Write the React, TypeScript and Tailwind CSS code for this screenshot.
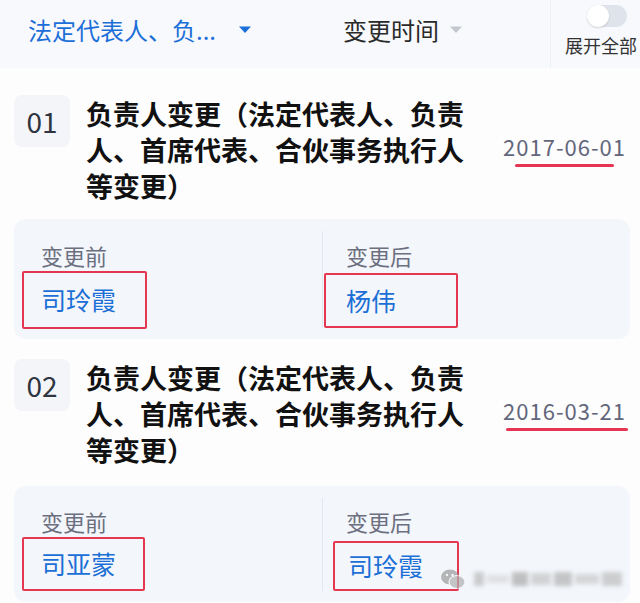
import React from "react";

const font = "font-['Noto_Sans_CJK_SC','Noto_Sans',sans-serif]";

type Change = {
  no: string;
  date: string;
  before: string;
  after: string;
};

const changes: Change[] = [
  { no: "01", date: "2017-06-01", before: "司玲霞", after: "杨伟" },
  { no: "02", date: "2016-03-21", before: "司亚蒙", after: "司玲霞" },
];

function Caret({ className }: { className: string }) {
  return (
    <svg width="14" height="9" viewBox="0 0 14 9" className={className}>
      <path d="M1 1.5h12L7 8z" fill="currentColor" strokeLinejoin="round" />
    </svg>
  );
}

function Watermark() {
  return (
    <div className="absolute right-[8px] bottom-[12px] flex items-center gap-2 opacity-70">
      <svg width="26" height="22" viewBox="0 0 26 22">
        <ellipse cx="10" cy="9" rx="9" ry="7.5" fill="#9a9a9a" />
        <ellipse cx="17" cy="14" rx="8" ry="6.5" fill="#b0b0b0" stroke="#f4f6fa" strokeWidth="1.2" />
        <circle cx="7" cy="7" r="1.2" fill="#f4f6fa" />
        <circle cx="12.5" cy="7" r="1.2" fill="#f4f6fa" />
      </svg>
      <div className="flex items-center gap-[3px] blur-[2px]">
        <div className="w-[10px] h-[14px] bg-[#b8b8b8]" />
        <div className="w-[22px] h-[8px] bg-[#d6d6d6]" />
        <div className="w-[16px] h-[14px] bg-[#a8a8a8]" />
        <div className="w-[20px] h-[12px] bg-[#c4c4c4]" />
        <div className="w-[18px] h-[14px] bg-[#b0b0b0]" />
        <div className="w-[24px] h-[10px] bg-[#c8c8c8]" />
        <div className="w-[20px] h-[14px] bg-[#bcbcbc]" />
      </div>
    </div>
  );
}

function ChangeItem({ item, last }: { item: Change; last: boolean }) {
  return (
    <div className={last ? "pt-[20px]" : "pt-[27px]"}>
      <div className="flex px-[14px]">
        <div className="w-[56px] h-[52px] shrink-0 rounded-lg bg-[#f4f5f9] flex items-center justify-center text-[28px] text-[#2f3440] font-normal">
          {item.no}
        </div>
        <div className="ml-[16px] w-[392px] text-[27px] leading-[36px] font-bold text-[#111] mt-[1px]">
          负责人变更（法定代表人、负责人、首席代表、合伙事务执行人等变更）
        </div>
        <div className="flex-1 flex flex-col items-end justify-start pt-[37px]">
          <div className="text-[22px] leading-[28px] tracking-[1px] text-[#62667a]">{item.date}</div>
          <div className={`mt-[4px] h-[3px] rounded-full bg-[#e53552] ${last ? "w-[122px] mr-[-2px]" : "w-[99px] mr-[12px]"}`} />
        </div>
      </div>
      <div
        className={`relative mx-[14px] mr-[10px] ${last ? "mt-[18px] h-[116px]" : "mt-[15px] h-[120px]"} rounded-xl bg-[#f3f6fb] grid grid-cols-2`}
      >
        <div className={`pl-[8px] ${last ? "pt-[21px]" : "pt-[22px]"}`}>
          <div className="pl-[19px] text-[22px] leading-[28px] text-[#6b6f80]">变更前</div>
          <div className={`mt-[2px] border-2 border-[#e5374f] rounded-[2px] pl-[17px] flex items-center text-[25px] text-[#1b6fd6] ${last ? "w-[123px] h-[54px]" : "w-[125px] h-[58px]"}`}>
            {item.before}
          </div>
        </div>
        <div className={`border-l border-[#e3e7ee] my-[12px] pl-[1px] ${last ? "pt-[9px]" : "pt-[10px]"}`}>
          <div className="pl-[22px] text-[22px] leading-[28px] text-[#6b6f80]">变更后</div>
          <div className={`border-2 border-[#e5374f] rounded-[2px] flex items-center text-[25px] text-[#1b6fd6] ${last ? "mt-[6px] ml-[9px] pl-[13px] w-[126px] h-[50px]" : "mt-[4px] pl-[20px] w-[134px] h-[55px]"}`}>
            {item.after}
          </div>
        </div>
        {last && <Watermark />}
      </div>
    </div>
  );
}

export default function App() {
  return (
    <div className={`w-[640px] h-[603px] overflow-hidden bg-[#fdfdfe] ${font}`}>
      <div className="h-[68px] bg-[#f7f9fc] flex items-stretch">
        <div className="w-[320px] pl-[28px] pt-[13px] flex items-start gap-[22px]">
          <span className="text-[24px] leading-[34px] text-[#1c6fd8]">法定代表人、负...</span>
          <Caret className="text-[#1c6fd8] mt-[12px]" />
        </div>
        <div className="flex-1 pl-[23px] pt-[13px] flex items-start gap-[10px]">
          <span className="text-[24px] leading-[34px] text-[#2a2a2a]">变更时间</span>
          <Caret className="text-[#c4c7cf] mt-[12px]" />
        </div>
        <div className="w-[90px] border-l border-[#eceff4] flex flex-col items-start pl-[14px] pt-[5px]">
          <div className="ml-[22px] w-[40px] h-[22px] rounded-full bg-[#dfe3ec] relative">
            <div className="absolute left-0 top-0 w-[22px] h-[22px] rounded-full bg-white shadow-[0_1px_2px_rgba(0,0,0,0.15)]" />
          </div>
          <span className="mt-[6px] text-[18px] leading-[24px] text-[#333] whitespace-nowrap">展开全部</span>
        </div>
      </div>
      {changes.map((c, i) => (
        <ChangeItem key={c.no} item={c} last={i === changes.length - 1} />
      ))}
    </div>
  );
}
